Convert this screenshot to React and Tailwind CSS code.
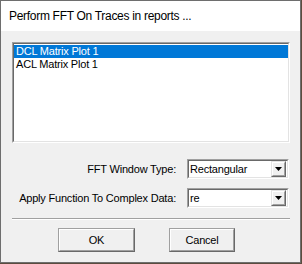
import React from 'react';

const font = { fontFamily: '"Liberation Sans", Arial, sans-serif' };

const Sunken = ({ className = '', children }) => (
  <div className={`border border-t-[#a0a0a0] border-l-[#a0a0a0] border-b-white border-r-white ${className}`}>
    <div className="h-full w-full border border-t-[#696969] border-l-[#696969] border-b-[#e3e3e3] border-r-[#e3e3e3] bg-white">
      {children}
    </div>
  </div>
);

const Combo = ({ value }) => (
  <Sunken className="h-[20px] w-[102px]">
    <div className="flex h-full items-center">
      <div className="flex-1 pl-[1px] text-[11px] tracking-[-0.2px] text-black">{value}</div>
      <div className="mr-[1px] h-[16px] w-[15px] border border-t-[#e3e3e3] border-l-[#e3e3e3] border-b-[#696969] border-r-[#696969]">
        <div className="flex h-full w-full items-center justify-center border border-t-white border-l-white border-b-[#a0a0a0] border-r-[#a0a0a0] bg-[#f0f0f0]">
          <svg width="7" height="4" viewBox="0 0 7 4">
            <path d="M0 0h7L3.5 4z" fill="#000" />
          </svg>
        </div>
      </div>
    </div>
  </Sunken>
);

const Button = ({ label, width }) => (
  <div className={`h-[24px] border border-t-[#a0a0a0] border-l-[#a0a0a0] border-b-[#696969] border-r-[#696969] ${width}`}>
    <div className="flex h-full w-full items-center justify-center border border-t-white border-l-white border-b-[#a0a0a0] border-r-[#a0a0a0] bg-[#f0f0f0] text-[11px] tracking-[-0.2px] text-black">
      {label}
    </div>
  </div>
);

export default function App() {
  return (
    <div className="h-[264px] w-[302px] bg-[#5b4c3e]" style={font}>
      <div className="flex h-[263px] w-[301px] flex-col border border-[#6e6e6e] bg-[#f0f0f0]">
        {/* title bar */}
        <div className="flex h-[30px] items-center bg-white pl-[8px] text-[12px] tracking-[-0.3px] text-black">
          Perform FFT On Traces in reports ...
        </div>

        {/* list */}
        <div className="pl-[11px] pt-[11px]">
          <Sunken className="h-[101px] w-[278px]">
            <div className="pt-[1px] text-[11px] leading-[13px] tracking-[-0.2px]">
              <div className="bg-[#0078d7] pl-[2px] text-white">DCL Matrix Plot 1</div>
              <div className="pl-[2px] text-black">ACL Matrix Plot 1</div>
            </div>
          </Sunken>
        </div>

        {/* options */}
        <div className="mt-[16px] flex flex-col gap-[9px] pl-[186px]">
          <div className="relative flex items-center">
            <span className="absolute right-[124px] whitespace-nowrap text-[11px] tracking-[-0.2px] text-black">FFT Window Type:</span>
            <Combo value="Rectangular" />
          </div>
          <div className="relative flex items-center">
            <span className="absolute right-[124px] whitespace-nowrap text-[11px] tracking-[-0.2px] text-black">Apply Function To Complex Data:</span>
            <Combo value="re" />
          </div>
        </div>

        {/* separator */}
        <div className="ml-[11px] mt-[10px] w-[278px] border-t border-b border-t-[#a0a0a0] border-b-white" />

        {/* buttons */}
        <div className="mt-[8px] flex gap-[34px] pl-[57px]">
          <Button label="OK" width="w-[77px]" />
          <Button label="Cancel" width="w-[66px]" />
        </div>
      </div>
    </div>
  );
}
